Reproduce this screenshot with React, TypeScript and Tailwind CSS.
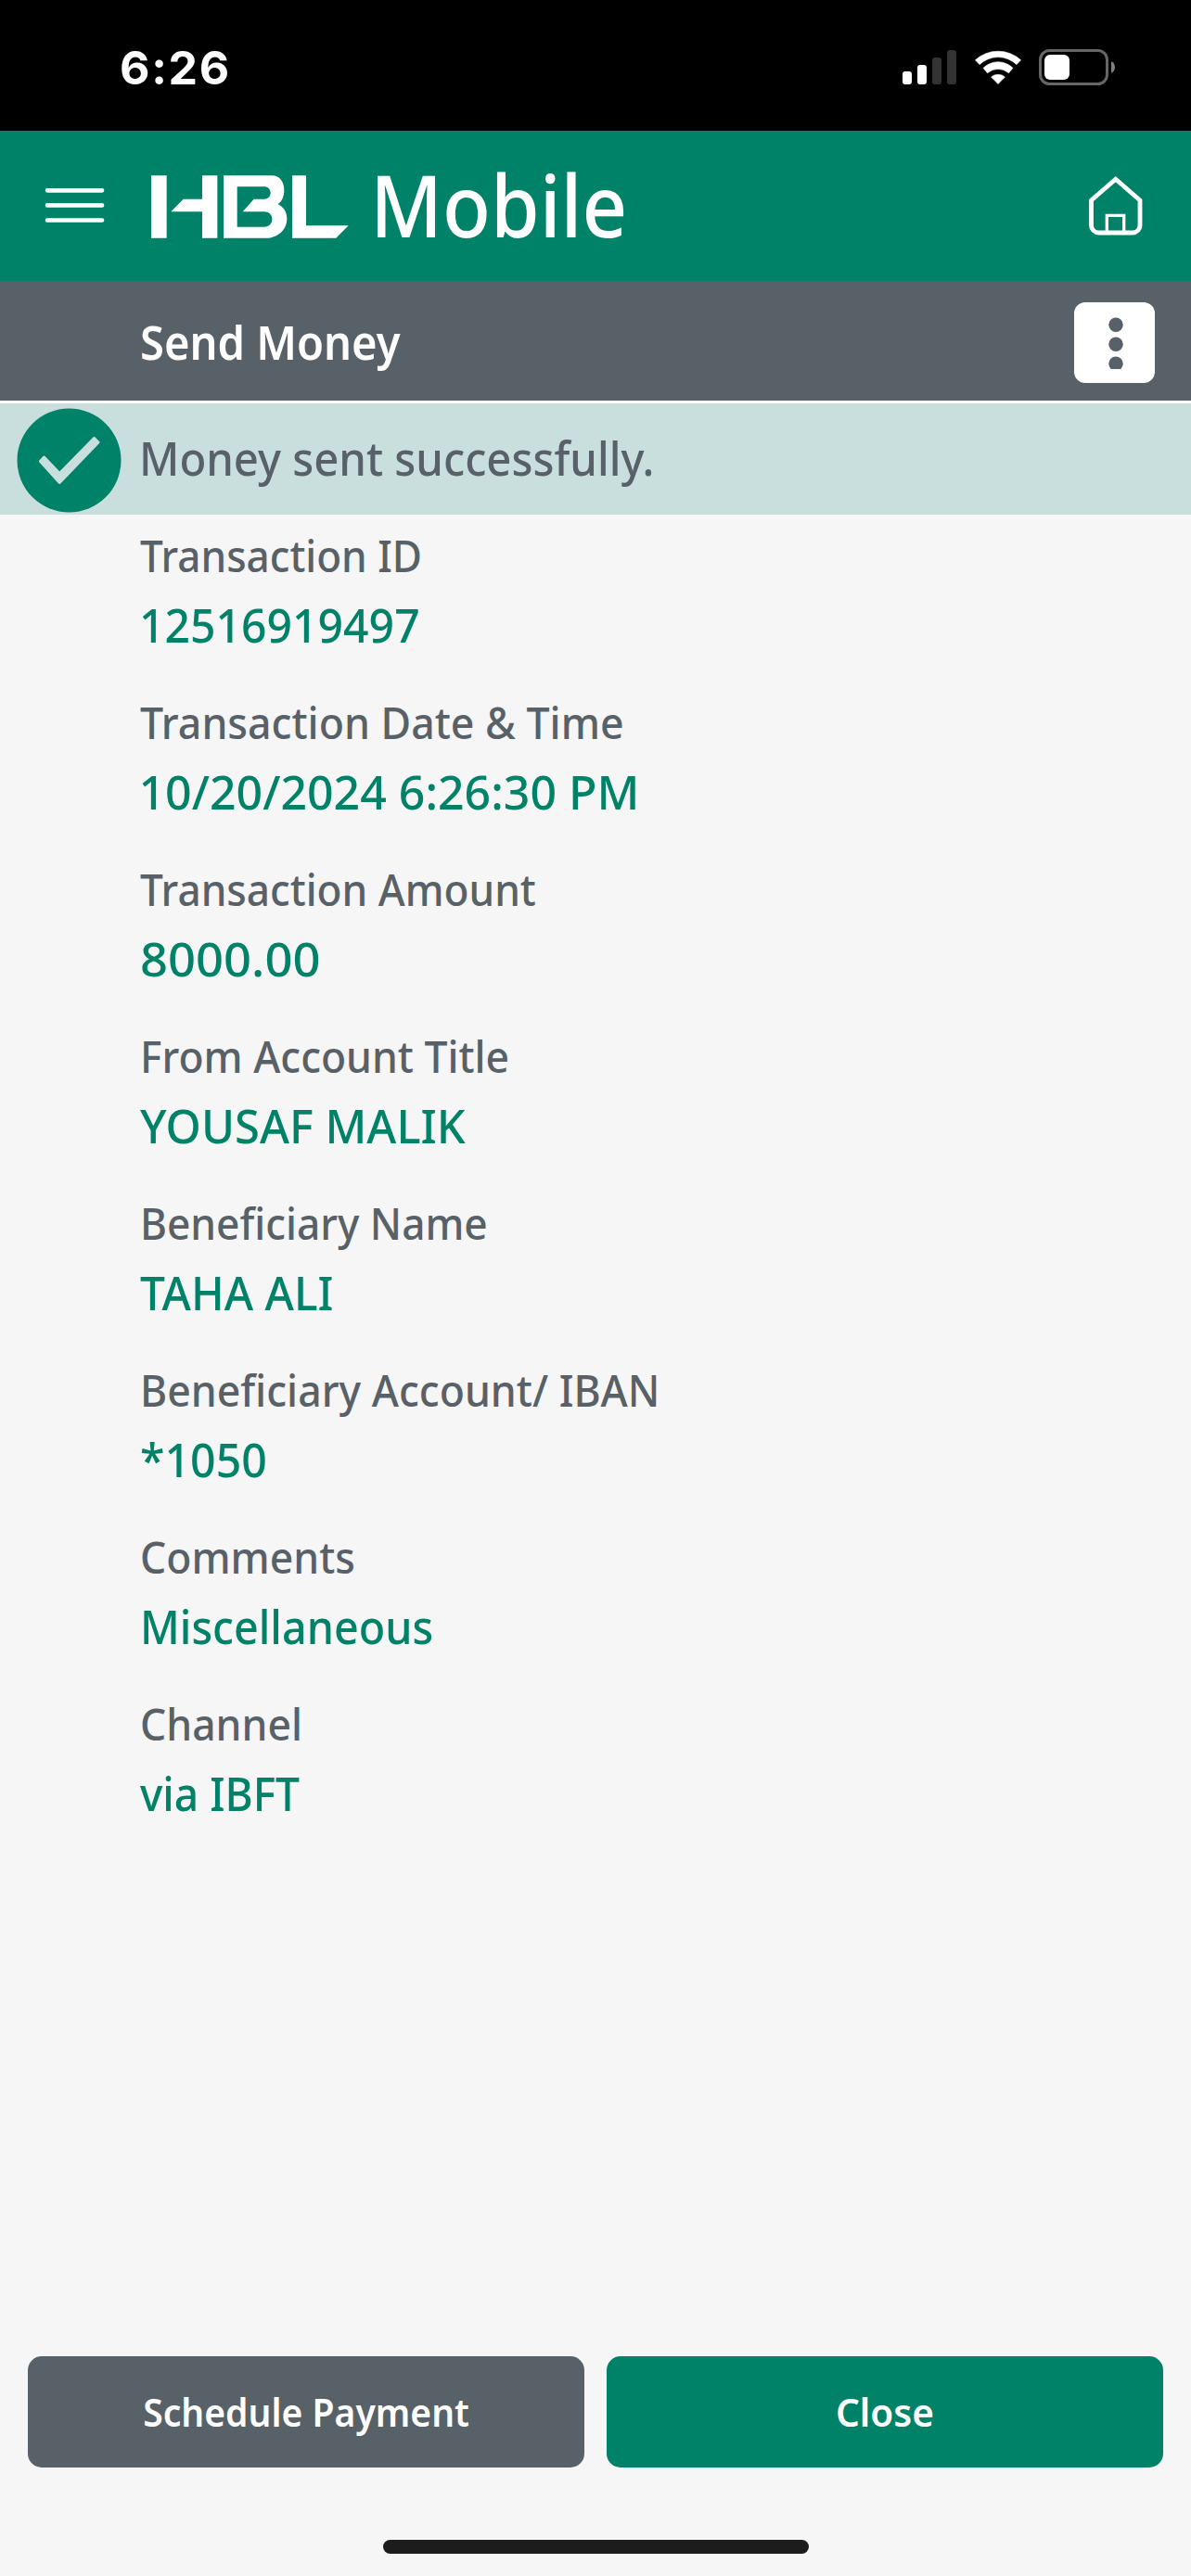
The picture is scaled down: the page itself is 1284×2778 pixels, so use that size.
type Detail = { label: string; value: string; labelFit: string; valueFit: string };

const details: Detail[] = [
  { label: "Transaction ID", value: "12516919497", labelFit: "scale-x-[0.918]", valueFit: "scale-x-[0.962] -ml-[1px]" },
  { label: "Transaction Date & Time", value: "10/20/2024 6:26:30 PM", labelFit: "scale-x-[0.93]", valueFit: "scale-x-[1] -ml-[1px]" },
  { label: "Transaction Amount", value: "8000.00", labelFit: "scale-x-[0.92]", valueFit: "scale-x-[1.05]" },
  { label: "From Account Title", value: "YOUSAF MALIK", labelFit: "scale-x-[0.926]", valueFit: "scale-x-[0.978]" },
  { label: "Beneficiary Name", value: "TAHA ALI", labelFit: "scale-x-[0.922]", valueFit: "scale-x-[0.958]" },
  { label: "Beneficiary Account/ IBAN", value: "*1050", labelFit: "scale-x-[0.929]", valueFit: "scale-x-[0.965]" },
  { label: "Comments", value: "Miscellaneous", labelFit: "scale-x-[0.927]", valueFit: "scale-x-[0.933]" },
  { label: "Channel", value: "via IBFT", labelFit: "scale-x-[0.927]", valueFit: "scale-x-[0.923]" },
];

function StatusBar() {
  return (
    <div className="flex h-[141px] items-center bg-black pt-[4px] pr-[82px] pl-[129px] text-white">
      <span className="font-['Inter',sans-serif] text-[50px] leading-none font-bold tracking-[1.7px]">6:26</span>
      <div className="ml-auto flex items-center">
        <svg width="58" height="37" viewBox="0 0 58 37">
          <rect x="0" y="23" width="10" height="14" rx="3" fill="#fff" />
          <rect x="16" y="16" width="10" height="21" rx="3" fill="#fff" />
          <rect x="32" y="8" width="10" height="29" rx="3" fill="#333" />
          <rect x="48" y="0" width="10" height="37" rx="3" fill="#333" />
        </svg>
        <svg className="ml-[19.5px]" width="50" height="37" viewBox="0 0 50 37" fill="#fff" stroke="#fff" strokeWidth="0.6" strokeLinejoin="round">
          <path d="M.4 10.8A36.4 36.4 0 0 1 49.6 10.8L45 15.6A29 29 0 0 0 5 15.6Z" />
          <path d="M9 19.4A22.6 22.6 0 0 1 41 19.4L36.4 24.8A17 17 0 0 0 13.6 24.8Z" />
          <path d="M17.6 29A11.5 11.5 0 0 1 32.4 29L25 36.6Z" />
        </svg>
        <svg className="ml-[19.5px]" width="82" height="39" viewBox="0 0 82 39">
          <rect x="1.5" y="1.5" width="72" height="36" rx="10" fill="none" stroke="#666" strokeWidth="3" />
          <rect x="6" y="6" width="27" height="27" rx="6" fill="#fff" />
          <path d="M78 13.3C83.3 15 83.3 24 78 25.7Z" fill="#808080" />
        </svg>
      </div>
    </div>
  );
}

function Header() {
  return (
    <header className="flex h-[162px] items-center bg-[#008268] pr-[52px] pl-[48px] text-white">
      <button aria-label="Menu">
        <svg width="65" height="40" viewBox="0 0 65 40" stroke="#fff" strokeWidth="4.7" strokeLinecap="round">
          <path d="M3 3.3H62M3 19.4H62M3 35.5H62" />
        </svg>
      </button>
      <svg className="ml-[50px] mt-[2px]" width="213" height="68" viewBox="39 27 639 204" fill="#fff" role="img" aria-label="HBL">
        <path d="M39 28H89V230H39Z" />
        <path d="M204 28H253V230H204V145H103L143 104H204Z" />
        <path
          fillRule="evenodd"
          d="M273 28H430C454 28 469 48 469 75C469 97 461 112 449 121C468 130 478 147 478 168C478 200 456 224 420 230H273ZM317 64V194H405C420 194 430 184 430 169C430 155 420 145 405 145H335L371 104H405C417 104 425 96 425 84C425 72 415 64 405 64Z"
        />
        <path d="M495 28H540V190H677L637 230H495Z" />
      </svg>
      <span className="-mt-[4px] ml-[23px] origin-left scale-x-[0.914] text-[93px] leading-none font-medium">Mobile</span>
      <button aria-label="Home" className="ml-auto">
        <svg width="58" height="64" viewBox="0 0 58 64" fill="none" stroke="#fff">
          <path d="M28.8 3.2L55 26V53A8 8 0 0 1 47 61H10.5A8 8 0 0 1 2.5 53V26Z" strokeWidth="4.8" />
          <path d="M19.3 60V42.3H37.7V60" strokeWidth="3.3" />
        </svg>
      </button>
    </header>
  );
}

function TitleBar() {
  return (
    <div className="flex h-[132px] items-center border-b-[3px] border-white bg-[#596168] pr-[39px] pl-[151px]">
      <h1 className="mt-[3px] origin-left scale-x-[0.942] text-[50px] font-semibold text-white">Send Money</h1>
      <button aria-label="More options" className="mt-[4px] ml-auto flex size-[87px] justify-center rounded-[12px] bg-white pt-[16px] pl-[3px]">
        <svg width="16" height="56" viewBox="0 0 16 56" fill="#596168">
          <circle cx="8" cy="8.3" r="7.7" />
          <circle cx="8" cy="29.3" r="7.7" />
          <circle cx="8" cy="50.2" r="7.7" />
        </svg>
      </button>
    </div>
  );
}

function SuccessBanner() {
  return (
    <div className="flex h-[120px] items-center bg-[#c9dfdd] pl-[18px]">
      <svg className="mt-[2px] shrink-0" width="113" height="113" viewBox="0 0 113 113">
        <circle cx="56.5" cy="56.5" r="56" fill="#008268" />
        <path
          d="M25.5 57.5L29.5 53L46.2 70.5L83.5 32.5L88 37L46.2 80.5Z"
          fill="#c9dfdd"
          stroke="#c9dfdd"
          strokeWidth="3"
          strokeLinejoin="round"
        />
      </svg>
      <p className="-mt-[1px] ml-[19px] origin-left scale-x-[0.945] text-[50px] font-medium whitespace-nowrap">
        Money sent successfully.
      </p>
    </div>
  );
}

export default function App() {
  return (
    <div className="flex h-[2778px] w-[1284px] flex-col overflow-hidden bg-[#f6f6f6] font-['Noto_Sans',sans-serif] text-[#596168]">
      <StatusBar />
      <Header />
      <TitleBar />
      <SuccessBanner />
      <dl className="flex flex-col gap-[28px] pt-[7px] pl-[150.5px]">
        {details.map((d) => (
          <div key={d.label} className="whitespace-nowrap">
            <dt className={`origin-left text-[48px] leading-[73px] font-medium ${d.labelFit}`}>
              {d.label}
            </dt>
            <dd className={`origin-left text-[50px] leading-[79px] font-medium text-[#008268] ${d.valueFit}`}>
              {d.value}
            </dd>
          </div>
        ))}
      </dl>
      <div className="mt-auto flex gap-[24px] px-[30px] text-[42px] font-semibold text-white">
        <button className="flex h-[120px] flex-1 items-center justify-center rounded-[15px] bg-[#596168] pb-[2px]">
          <span className="scale-x-[0.93]">Schedule Payment</span>
        </button>
        <button className="flex h-[120px] flex-1 items-center justify-center rounded-[15px] bg-[#008268] pb-[2px]">
          <span className="scale-x-[0.965]">Close</span>
        </button>
      </div>
      <div className="mx-auto mt-[78px] mb-[24px] h-[15px] w-[459px] shrink-0 rounded-full bg-[#1c1c1c]" />
    </div>
  );
}
